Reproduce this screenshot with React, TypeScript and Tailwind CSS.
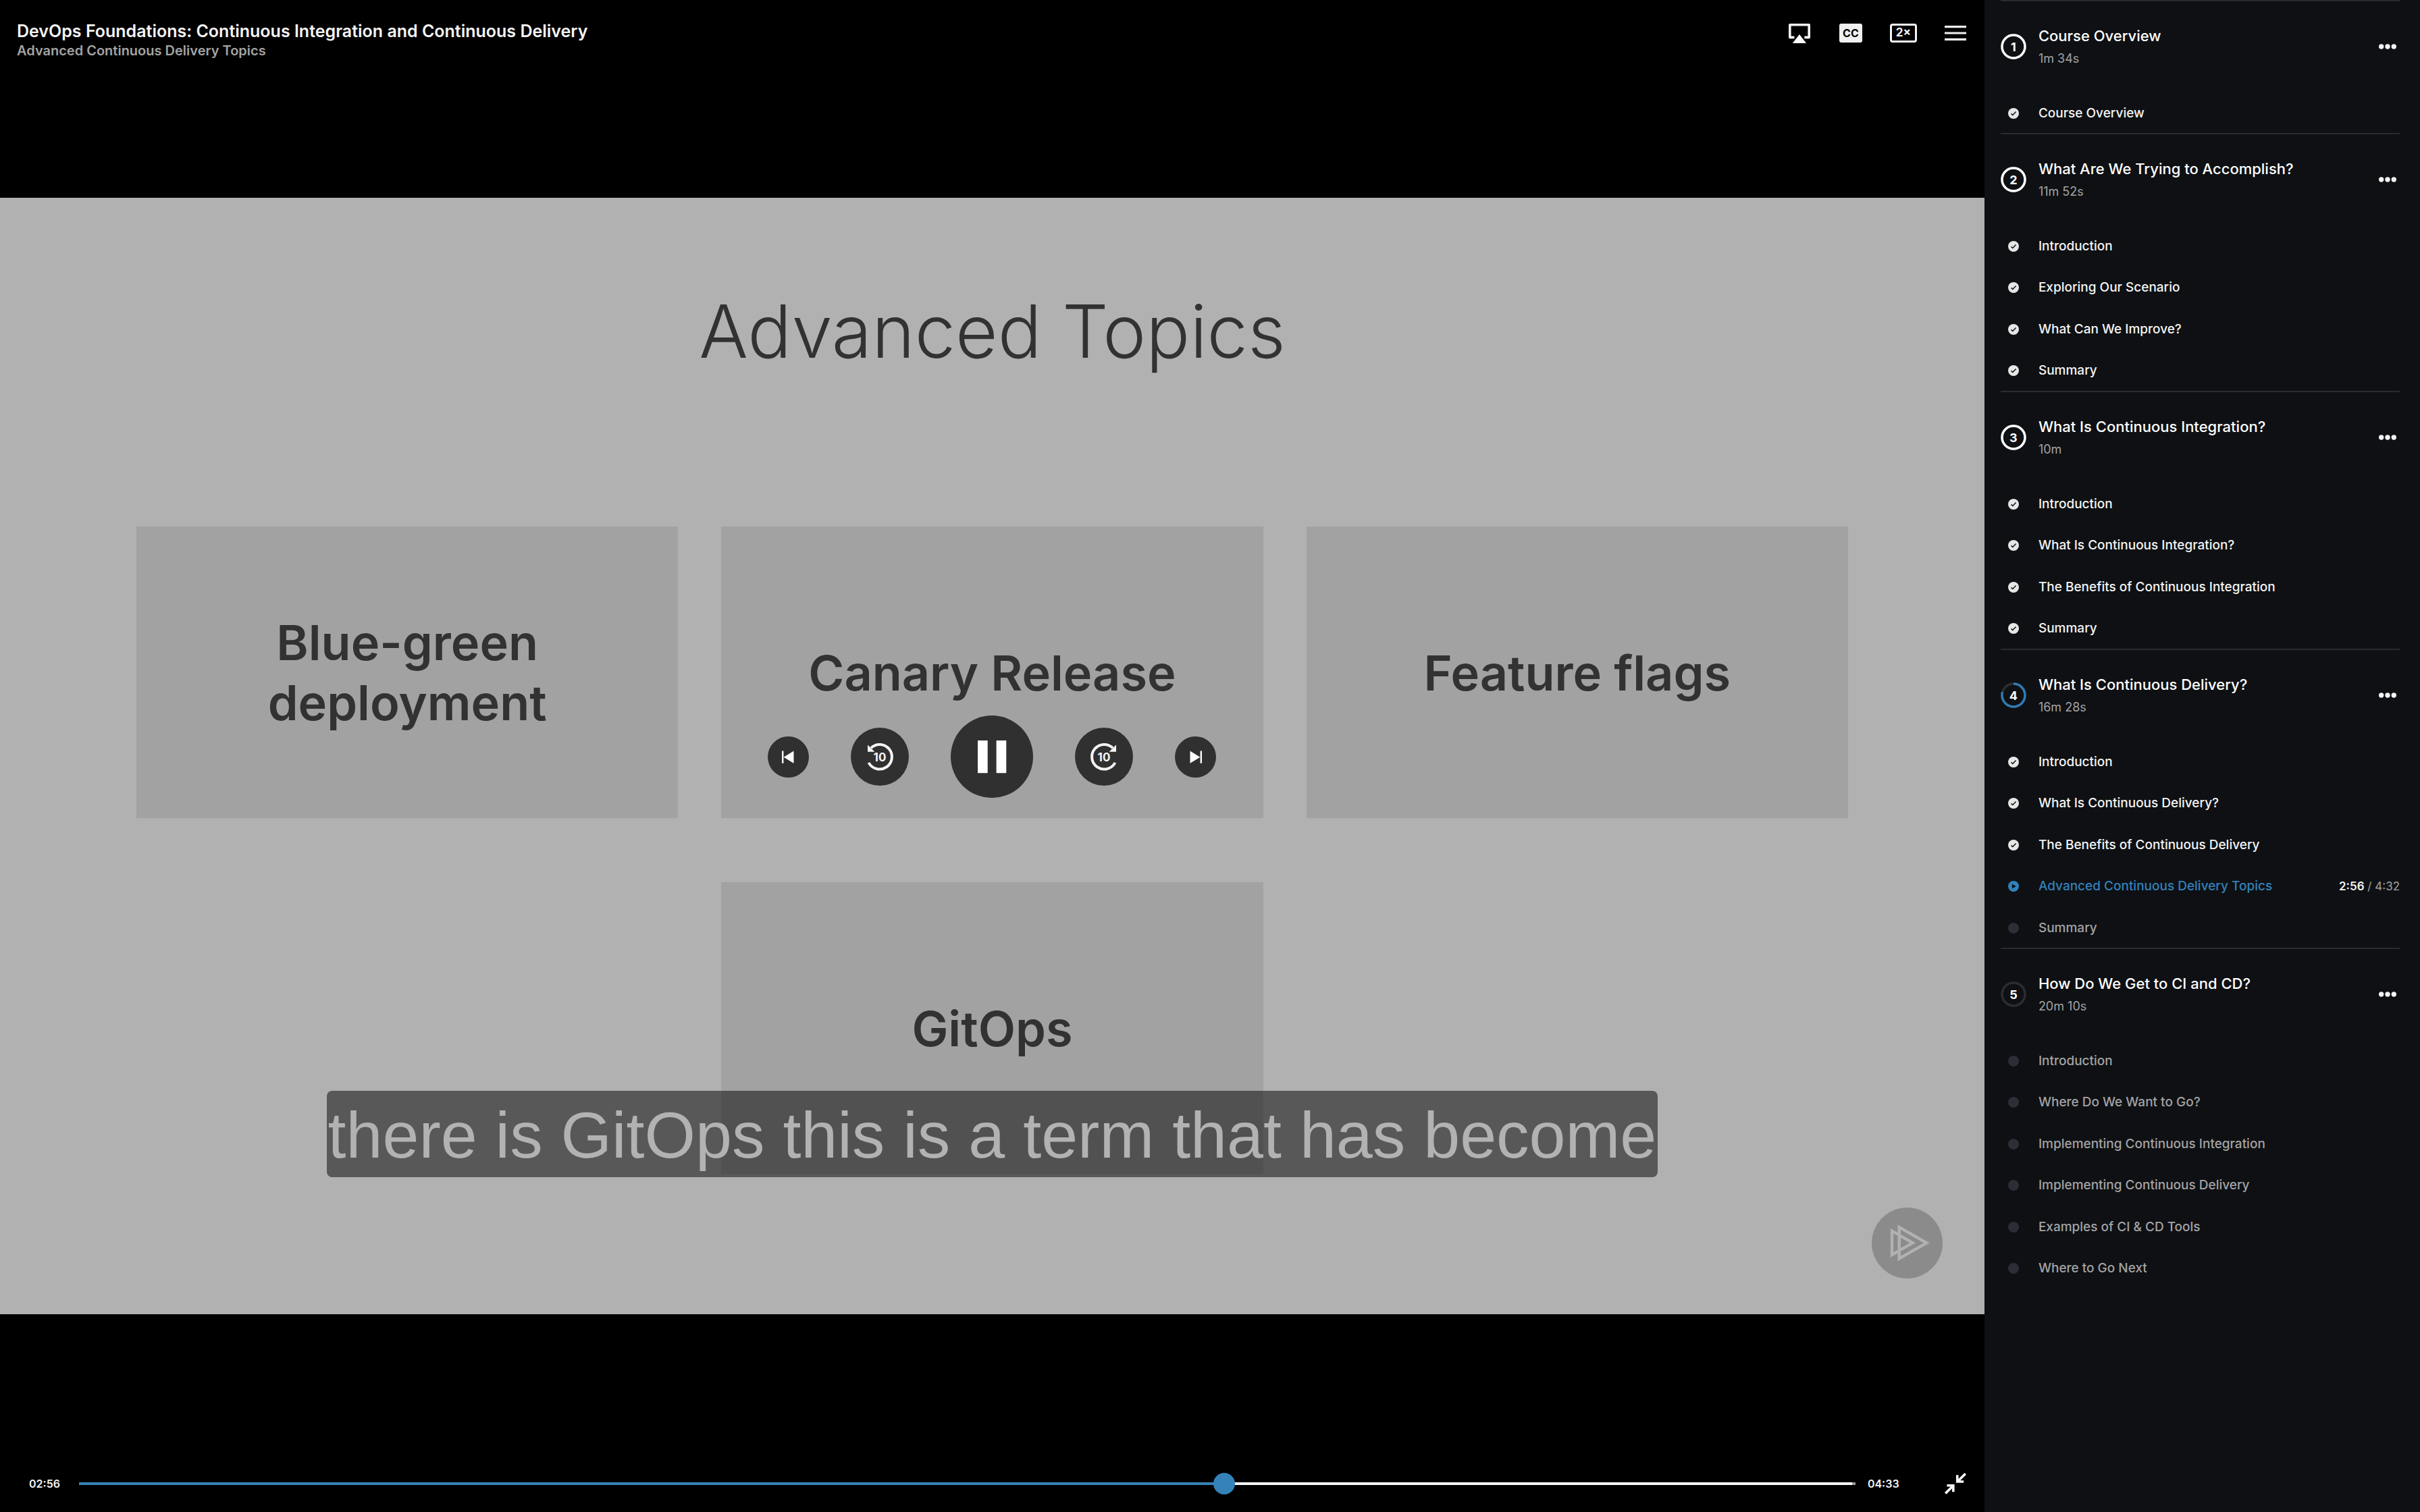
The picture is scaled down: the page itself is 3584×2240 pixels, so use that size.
import React, { useState } from 'react';

type Status = 'done' | 'current' | 'todo';

interface Clip {
  title: string;
  status: Status;
}

interface Module {
  title: string;
  duration: string;
  progress: number;
  clips: Clip[];
}

const clips = (status: Status, titles: string[]): Clip[] => titles.map((title) => ({ title, status }));

const MODULES: Module[] = [
  {
    title: 'Course Overview',
    duration: '1m 34s',
    progress: 1,
    clips: clips('done', ['Course Overview']),
  },
  {
    title: 'What Are We Trying to Accomplish?',
    duration: '11m 52s',
    progress: 1,
    clips: clips('done', ['Introduction', 'Exploring Our Scenario', 'What Can We Improve?', 'Summary']),
  },
  {
    title: 'What Is Continuous Integration?',
    duration: '10m',
    progress: 1,
    clips: clips('done', [
      'Introduction',
      'What Is Continuous Integration?',
      'The Benefits of Continuous Integration',
      'Summary',
    ]),
  },
  {
    title: 'What Is Continuous Delivery?',
    duration: '16m 28s',
    progress: 0.79,
    clips: [
      ...clips('done', ['Introduction', 'What Is Continuous Delivery?', 'The Benefits of Continuous Delivery']),
      ...clips('current', ['Advanced Continuous Delivery Topics']),
      ...clips('todo', ['Summary']),
    ],
  },
  {
    title: 'How Do We Get to CI and CD?',
    duration: '20m 10s',
    progress: 0,
    clips: clips('todo', [
      'Introduction',
      'Where Do We Want to Go?',
      'Implementing Continuous Integration',
      'Implementing Continuous Delivery',
      'Examples of CI & CD Tools',
      'Where to Go Next',
    ]),
  },
];

const CLIP_TEXT: Record<Status, string> = {
  done: 'text-[#f4f4f4]',
  current: 'text-[#3182bd]',
  todo: 'text-[#a3a3a5]',
};

function ModuleRing({ number, progress }: { number: number; progress: number }) {
  const length = 2 * Math.PI * 17;
  return (
    <span className="relative flex size-[38px] shrink-0 items-center justify-center text-[18px] font-bold text-white">
      <svg viewBox="0 0 38 38" className="absolute inset-0 size-full -rotate-90" fill="none" strokeWidth="3.5">
        <circle cx="19" cy="19" r="17" stroke="#2b2d33" />
        {progress > 0 && (
          <circle
            cx="19"
            cy="19"
            r="17"
            stroke={progress === 1 ? '#ffffff' : '#2f7ab3'}
            strokeDasharray={progress === 1 ? undefined : `${length * progress} ${length}`}
          />
        )}
      </svg>
      <span className="relative">{number}</span>
    </span>
  );
}

function ClipIcon({ status }: { status: Status }) {
  return (
    <svg viewBox="0 0 16 16" className="size-4" fill="none">
      {status === 'done' && (
        <>
          <circle cx="8" cy="8" r="8" fill="#e6e6e6" />
          <path d="M4.6 8.4 6.8 10.5 11.6 5.4" stroke="#0e1013" strokeWidth="1.5" />
        </>
      )}
      {status === 'current' && (
        <>
          <circle cx="8" cy="8" r="8" fill="#3182bd" />
          <path d="M5.8 4.4 11.8 8 5.8 11.6Z" fill="#0e1013" />
        </>
      )}
      {status === 'todo' && <circle cx="8" cy="8" r="8" fill="#2b2e36" />}
    </svg>
  );
}

function ModuleSection({ module, number }: { module: Module; number: number }) {
  return (
    <section className="border-t-2 border-[#2a2b2f]">
      <header className="flex h-[134px] items-start pt-[33px]">
        <div className="flex w-full items-center gap-[18px]">
          <ModuleRing number={number} progress={module.progress} />
          <div className="min-w-0 flex-1">
            <h2 className="text-[22px] leading-[36px] font-medium text-white">{module.title}</h2>
            <p className="text-[18px] leading-[32px] text-[#a3a3a5]">{module.duration}</p>
          </div>
          <button type="button" aria-label={`Options for ${module.title}`} className="mr-[5px]">
            <svg viewBox="0 0 26 8" className="h-2 w-[26px]" fill="#f4f4f4">
              <circle cx="3.7" cy="4" r="3.7" />
              <circle cx="13" cy="4" r="3.7" />
              <circle cx="22.3" cy="4" r="3.7" />
            </svg>
          </button>
        </div>
      </header>
      <ul>
        {module.clips.map((clip) => (
          <li key={clip.title} className="flex items-center gap-[18px] pt-0.5 odd:h-[61px] even:h-[62px]">
            <span className="flex w-[38px] shrink-0 justify-center">
              <ClipIcon status={clip.status} />
            </span>
            <a href="#clip" className={`flex-1 text-[19px] leading-[28px] font-medium ${CLIP_TEXT[clip.status]}`}>
              {clip.title}
            </a>
            {clip.status === 'current' && (
              <span className="text-[17px] leading-[28px] text-[#a3a3a5]">
                <span className="font-semibold text-[#f4f4f4]">2:56</span> / 4:32
              </span>
            )}
          </li>
        ))}
      </ul>
    </section>
  );
}

function Card({ children, className = '' }: { children: React.ReactNode; className?: string }) {
  return (
    <div
      className={`flex h-[432px] items-center justify-center bg-[#a2a2a2] px-8 text-center text-[72px] leading-[89px] font-semibold text-[#323232] ${className}`}
    >
      {children}
    </div>
  );
}

function Slide() {
  return (
    <div className="relative aspect-video w-full bg-[#b1b1b1] px-[202px] pt-[138px]">
      <h2 className="text-center text-[108px] leading-[120px] font-light text-[#323232]">Advanced Topics</h2>
      <div className="mt-[229px] grid grid-cols-3 gap-x-16 gap-y-[95px]">
        <Card>
          Blue-green
          <br />
          deployment
        </Card>
        <Card>Canary Release</Card>
        <Card>Feature flags</Card>
        <Card className="col-start-2">GitOps</Card>
      </div>
      <svg viewBox="0 0 105 105" className="absolute right-[62px] bottom-[53px] size-[105px]" fill="none">
        <circle cx="52.5" cy="52.5" r="52.5" fill="#8b8b8b" />
        <path
          d="M40.7 29.1 81.3 52.3 40.7 75.5ZM30 34.6 60.7 52.3 30 70Z"
          stroke="#b1b1b1"
          strokeWidth="4.4"
          strokeMiterlimit="10"
        />
      </svg>
    </div>
  );
}

function RoundButton({ label, className, children }: { label: string; className: string; children: React.ReactNode }) {
  return (
    <button type="button" aria-label={label} className={`shrink-0 overflow-hidden rounded-full bg-[#303030] ${className}`}>
      {children}
    </button>
  );
}

function TransportControls() {
  return (
    <div className="absolute inset-0 flex items-center justify-center gap-[62px] pt-0.5">
      <RoundButton label="Previous clip" className="size-[61px]">
        <svg viewBox="0 0 61 61" fill="#ffffff">
          <path d="M21 21.5H23.4V39.8H21ZM38.5 21.5V39.8L23.6 30.7Z" />
        </svg>
      </RoundButton>
      <RoundButton label="Back 10 seconds" className="size-[86px]">
        <svg viewBox="0 0 86 86">
          <path d="M26.5 51.9A18.3 18.3 0 1 0 30 30" fill="none" stroke="#f4f4f4" strokeWidth="4" />
          <path d="M25 25.6V35.8H35.4Z" fill="#f4f4f4" />
          <text x="43" y="50" textAnchor="middle" fill="#f4f4f4" className="text-[17px] font-bold">
            10
          </text>
        </svg>
      </RoundButton>
      <RoundButton label="Pause" className="size-[122px]">
        <svg viewBox="0 0 122 122" fill="#ffffff">
          <path d="M40 37H54.7V85.3H40ZM67.6 37H82.3V85.3H67.6Z" />
        </svg>
      </RoundButton>
      <RoundButton label="Forward 10 seconds" className="size-[86px]">
        <svg viewBox="0 0 86 86">
          <path d="M59.5 51.9A18.3 18.3 0 1 1 56 30" fill="none" stroke="#f4f4f4" strokeWidth="4" />
          <path d="M61 25.6V35.8H50.6Z" fill="#f4f4f4" />
          <text x="43" y="50" textAnchor="middle" fill="#f4f4f4" className="text-[17px] font-bold">
            10
          </text>
        </svg>
      </RoundButton>
      <RoundButton label="Next clip" className="size-[61px]">
        <svg viewBox="0 0 61 61" fill="#ffffff">
          <path d="M40 21.5H37.6V39.8H40ZM22.5 21.5V39.8L37.4 30.7Z" />
        </svg>
      </RoundButton>
    </div>
  );
}

function TopBar() {
  return (
    <header className="absolute inset-x-0 top-0 flex items-start justify-between pt-[30px] pr-[27px] pl-[25px]">
      <div>
        <h1 className="text-[25px] leading-[32px] font-semibold text-[#f4f4f4]">
          DevOps Foundations: Continuous Integration and Continuous Delivery
        </h1>
        <p className="text-[20px] leading-[26px] font-semibold text-[#a3a3a3]">Advanced Continuous Delivery Topics</p>
      </div>
      <div className="flex h-[38px] items-center gap-[41px]">
        <button type="button" aria-label="AirPlay" className="flex w-9 justify-center">
          <svg viewBox="0 0 32 29" className="h-[29px] w-8" fill="none">
            <path d="M8.4 20.4H1.8V1.8H30.2V20.4H23.4" stroke="#f4f4f4" strokeWidth="3.6" strokeLinejoin="round" />
            <path d="M15.9 16 26 29H5.8Z" fill="#ffffff" />
          </svg>
        </button>
        <button
          type="button"
          aria-label="Captions"
          className="flex h-7 w-[34px] items-center justify-center rounded-[3px] bg-[#f0f0f0] text-[16px] font-bold text-black"
        >
          CC
        </button>
        <button
          type="button"
          aria-label="Playback speed"
          className="flex h-7 w-10 items-center justify-center rounded-[4px] border-3 border-[#f4f4f4] text-[17px] font-bold text-[#f4f4f4]"
        >
          2×
        </button>
        <button type="button" aria-label="Table of contents">
          <svg viewBox="0 0 32 22" className="h-[22px] w-8" fill="#f0f0f0">
            <path d="M0 0H32V3.2H0ZM0 9.4H32V12.6H0ZM0 18.8H32V22H0Z" />
          </svg>
        </button>
      </div>
    </header>
  );
}

function SeekBar() {
  const total = 273;
  const [seconds, setSeconds] = useState(176.5);
  const fill = (seconds / total) * 100;
  return (
    <footer className="absolute inset-x-0 bottom-[26px] flex h-8 items-center pr-[27px] pl-[43px] text-[16px] leading-8 font-semibold text-[#f4f4f4]">
      <span className="w-[74px]">02:56</span>
      <input
        type="range"
        aria-label="Seek"
        min={0}
        max={total}
        step="any"
        value={seconds}
        onChange={(event) => setSeconds(Number(event.target.value))}
        style={{
          background: `linear-gradient(to right, #3582b9 ${fill}%, #f8f8f8 ${fill}%, #f8f8f8 99.8%, #9a9a9a 99.8%)`,
        }}
        className="h-1 min-w-0 flex-1 appearance-none [&::-webkit-slider-thumb]:size-8 [&::-webkit-slider-thumb]:appearance-none [&::-webkit-slider-thumb]:rounded-full [&::-webkit-slider-thumb]:bg-[#3582b9]"
      />
      <span className="ml-[18px] w-[114px]">04:33</span>
      <button type="button" aria-label="Exit full screen">
        <svg viewBox="0 0 32 32" className="size-8" fill="none" stroke="#f4f4f4" strokeWidth="3.6">
          <path d="M30.8 1.2 19 13M18.7 3.2V13H28.2" />
          <path d="M1.2 30.4 13 18.7M3.4 18.8H12.8V28.2" />
        </svg>
      </button>
    </footer>
  );
}

export default function App() {
  return (
    <div className="flex h-screen w-full overflow-hidden bg-black font-['Inter',sans-serif]">
      <main className="relative flex min-w-0 flex-1 items-center">
        <Slide />
        <TransportControls />
        <div className="absolute inset-x-0 bottom-[496px] flex justify-center">
          <p className="h-32 rounded-lg bg-black/50 px-0.5 font-['Liberation_Sans',sans-serif] text-[97px] leading-[132px] whitespace-nowrap text-[#b2b2b2]">
            there is GitOps this is a term that has become
          </p>
        </div>
        <TopBar />
        <SeekBar />
      </main>
      <aside className="w-[18%] shrink-0 overflow-hidden bg-[#0e1013] pr-[30px] pl-6" aria-label="Table of contents">
        {MODULES.map((module, index) => (
          <ModuleSection key={module.title} module={module} number={index + 1} />
        ))}
      </aside>
    </div>
  );
}
